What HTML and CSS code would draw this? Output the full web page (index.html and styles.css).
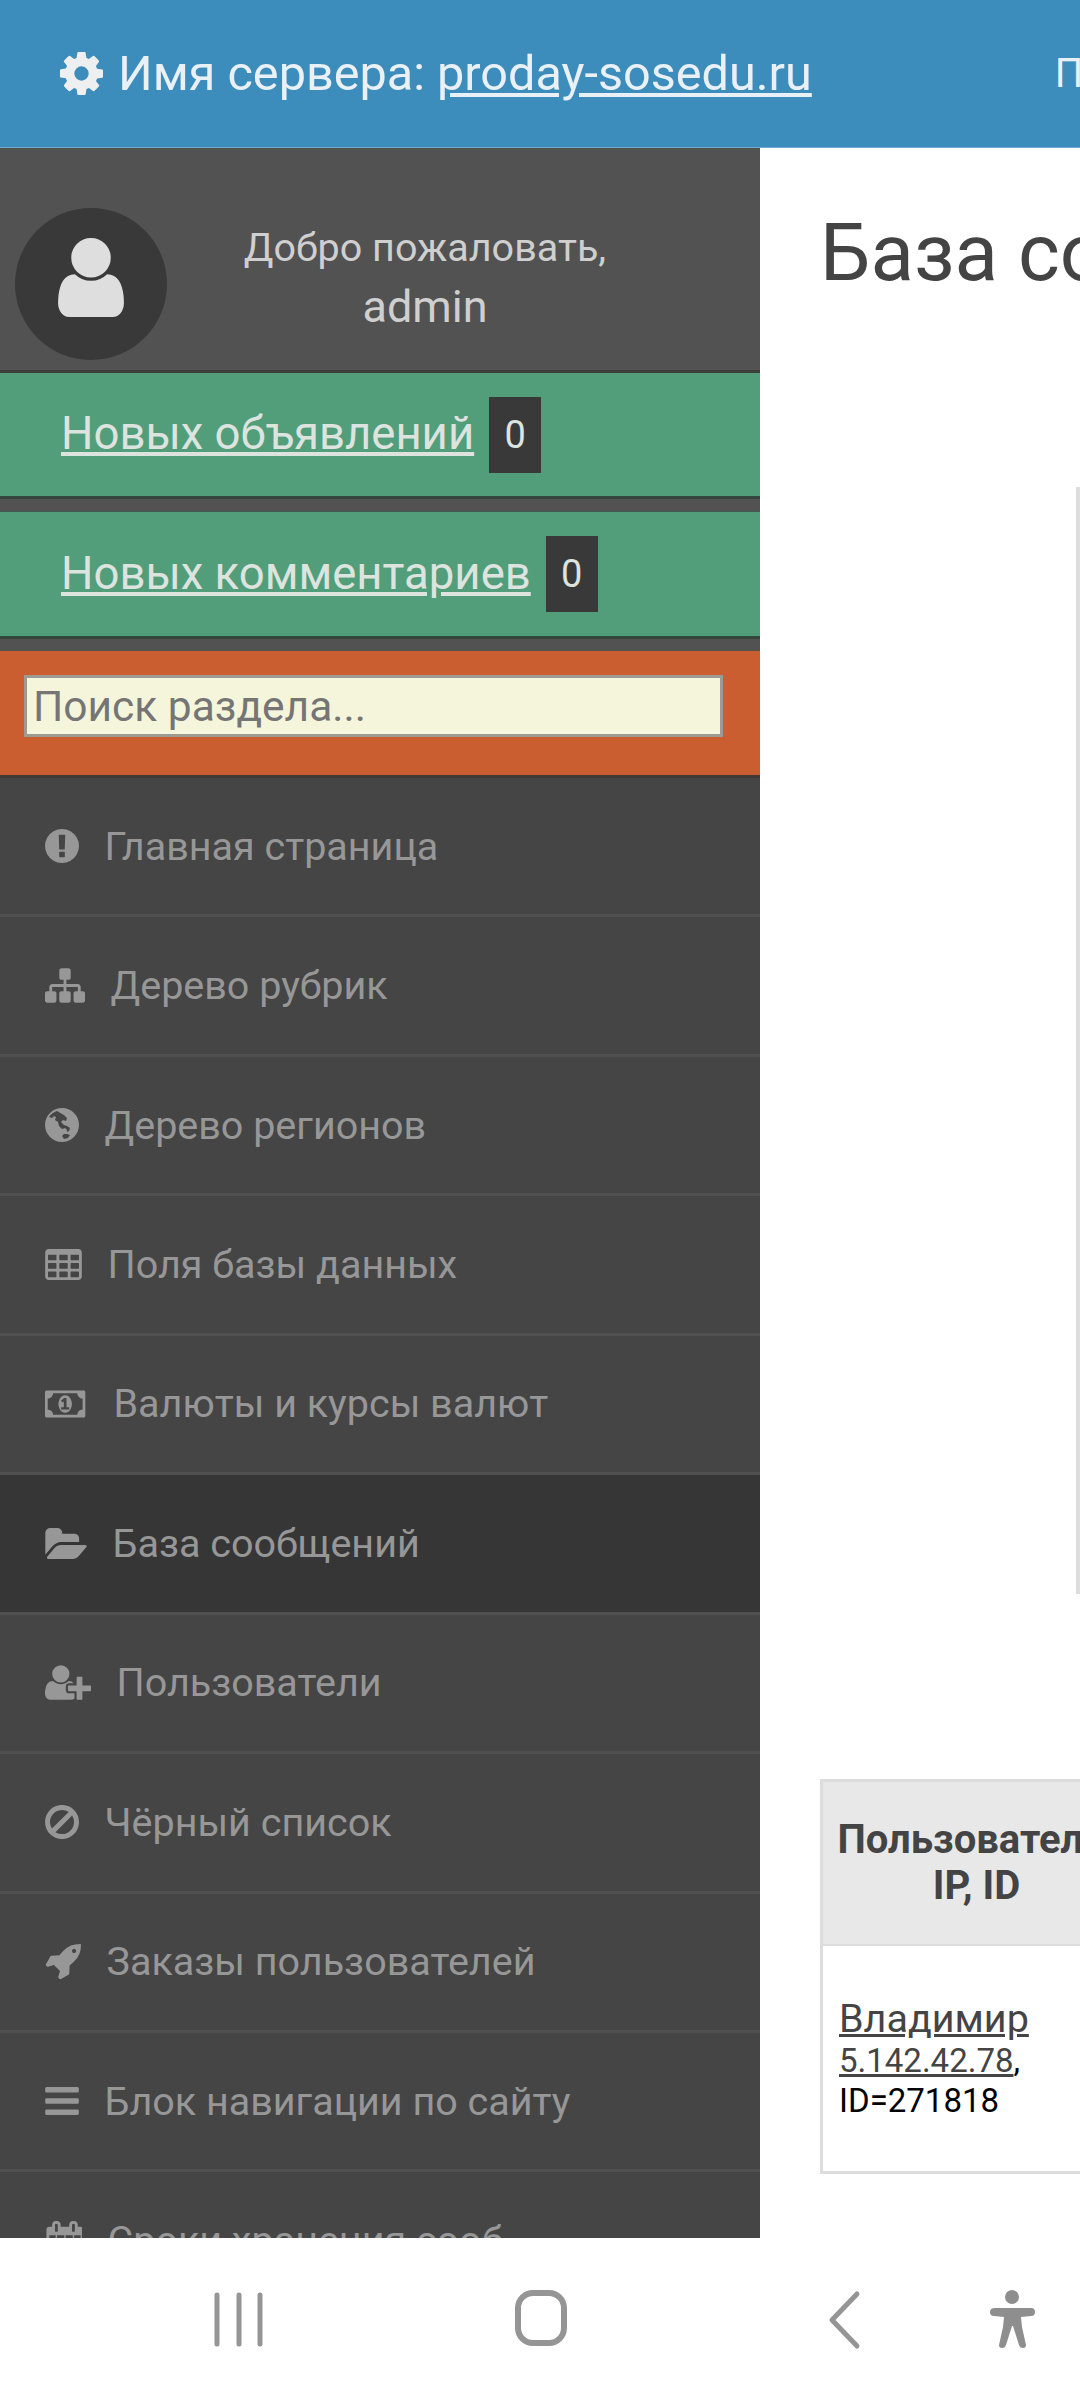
FILE: index.html
```html
<!DOCTYPE html>
<html lang="ru">
<head>
  <meta charset="UTF-8" />
  <meta name="viewport" content="width=device-width, initial-scale=1" />
  <title>База сообщений</title>
  <link rel="stylesheet" href="styles.css">
</head>
<body>
  <header class="topbar">
    <svg class="gear" viewBox="128 128 1536 1536" width="43" height="43"><path d="M1152 896q0-106-75-181t-181-75-181 75-75 181 75 181 181 75 181-75 75-181zm512-109v222q0 12-8 23t-20 13l-185 28q-19 54-39 91 35 50 107 138 10 12 10 25t-9 23q-27 37-99 108t-94 71q-12 0-26-9l-138-108q-44 23-91 38-16 136-29 186-7 28-36 28h-222q-14 0-24.5-8.5t-11.5-21.5l-28-184q-49-16-90-37l-141 107q-10 9-25 9-14 0-25-11-126-114-165-168-7-10-7-23 0-12 8-23 15-21 51-66.5t54-70.5q-27-50-41-99l-183-27q-13-2-21-12.5t-8-23.5v-222q0-12 8-23t19-13l186-28q14-46 39-92-40-57-107-138-10-12-10-24 0-10 9-23 26-36 98.5-107.5t94.5-71.5q13 0 26 10l138 107q44-23 91-38 16-136 29-186 7-28 36-28h222q14 0 24.5 8.5t11.5 21.5l28 184q49 16 90 37l142-107q9-9 24-9 13 0 25 10 129 119 165 170 7 8 7 22 0 12-8 23-15 21-51 66.5t-54 70.5q26 50 41 98l183 28q13 2 21 12.5t8 23.5z"/></svg>
    <span class="server">Имя сервера: <a href="#">proday-sosedu.ru</a></span>
    <span class="top-next">П</span>
  </header>

  <div class="layout">
    <aside class="sidebar">
      <div class="profile">
        <div class="avatar">
          <svg viewBox="256 128 1280 1536" width="66" height="79"><path d="M1536 1399q0 109-62.5 187t-150.5 78h-854q-88 0-150.5-78t-62.5-187q0-85 8.5-160.5t31.5-152 58.5-131 94-89 134.5-34.5q131 128 313 128t313-128q76 0 134.5 34.5t94 89 58.5 131 31.5 152 8.5 160.5zm-256-887q0 159-112.5 271.5t-271.5 112.5-271.5-112.5-112.5-271.5 112.5-271.5 271.5-112.5 271.5 112.5 112.5 271.5z"/></svg>
        </div>
        <div class="welcome">
          <p class="hello">Добро пожаловать,</p>
          <p class="name">admin</p>
        </div>
      </div>

      <div class="notice">
        <a href="#">Новых объявлений</a>
        <span class="badge">0</span>
      </div>
      <div class="notice">
        <a href="#">Новых комментариев</a>
        <span class="badge">0</span>
      </div>

      <div class="search">
        <input type="text" class="search-field" placeholder="Поиск раздела..." />
      </div>

      <ul class="menu">
        <li>
          <svg viewBox="128 128 1536 1536" width="34" height="34"><path d="M896 128q209 0 385.5 103t279.5 279.5 103 385.5-103 385.5-279.5 279.5-385.5 103-385.5-103-279.5-279.5-103-385.5 103-385.5 279.5-279.5 385.5-103zm128 1247v-190q0-14-9-23.5t-22-9.5h-192q-13 0-23 10t-10 23v190q0 13 10 23t23 10h192q13 0 22-9.5t9-23.5zm-2-344l18-621q0-12-10-18-10-8-24-8h-220q-14 0-24 8-10 6-10 18l17 621q0 10 10 17.5t24 7.5h185q14 0 23.5-7.5t10.5-17.5z"/></svg>
          Главная страница
        </li>
        <li>
          <svg viewBox="0 128 1792 1536" width="40" height="35"><path d="M1792 1248v320q0 40-28 68t-68 28h-320q-40 0-68-28t-28-68v-320q0-40 28-68t68-28h96v-192h-512v192h96q40 0 68 28t28 68v320q0 40-28 68t-68 28h-320q-40 0-68-28t-28-68v-320q0-40 28-68t68-28h96v-192h-512v192h96q40 0 68 28t28 68v320q0 40-28 68t-68 28h-320q-40 0-68-28t-28-68v-320q0-40 28-68t68-28h96v-192q0-52 38-90t90-38h512v-192h-96q-40 0-68-28t-28-68v-320q0-40 28-68t68-28h320q40 0 68 28t28 68v320q0 40-28 68t-68 28h-96v192h512q52 0 90 38t38 90v192h96q40 0 68 28t28 68z"/></svg>
          Дерево рубрик
        </li>
        <li>
          <svg viewBox="0 0 34 34" width="34" height="34"><circle cx="17" cy="17" r="17"/><path class="cut" d="M12 3c-3 1-6 3-8 6l3 1 2-2 2 1-1 3 3 2 1 4 3 3 3-1 2 2v2l2-1 1-3-3-2-3-1-3-3 2-2 3 1 1-3-3-3-2-1zM19 26l-2 2 2 3 4-1 2-3-3-1z"/></svg>
          Дерево регионов
        </li>
        <li>
          <svg viewBox="64 128 1664 1408" width="37" height="31"><path d="M576 1376v-192q0-14-9-23t-23-9h-320q-14 0-23 9t-9 23v192q0 14 9 23t23 9h320q14 0 23-9t9-23zm0-384v-192q0-14-9-23t-23-9h-320q-14 0-23 9t-9 23v192q0 14 9 23t23 9h320q14 0 23-9t9-23zm512 384v-192q0-14-9-23t-23-9h-320q-14 0-23 9t-9 23v192q0 14 9 23t23 9h320q14 0 23-9t9-23zm-512-768v-192q0-14-9-23t-23-9h-320q-14 0-23 9t-9 23v192q0 14 9 23t23 9h320q14 0 23-9t9-23zm512 384v-192q0-14-9-23t-23-9h-320q-14 0-23 9t-9 23v192q0 14 9 23t23 9h320q14 0 23-9t9-23zm512 384v-192q0-14-9-23t-23-9h-320q-14 0-23 9t-9 23v192q0 14 9 23t23 9h320q14 0 23-9t9-23zm-512-768v-192q0-14-9-23t-23-9h-320q-14 0-23 9t-9 23v192q0 14 9 23t23 9h320q14 0 23-9t9-23zm512 384v-192q0-14-9-23t-23-9h-320q-14 0-23 9t-9 23v192q0 14 9 23t23 9h320q14 0 23-9t9-23zm0-384v-192q0-14-9-23t-23-9h-320q-14 0-23 9t-9 23v192q0 14 9 23t23 9h320q14 0 23-9t9-23zm128-320v1088q0 66-47 113t-113 47h-1344q-66 0-113-47t-47-113v-1088q0-66 47-113t113-47h1344q66 0 113 47t47 113z"/></svg>
          Поля базы данных
        </li>
        <li>
          <svg viewBox="0 256 2048 1280" width="43" height="28"><path d="M768 1152h384v-96h-128v-448h-114l-148 137 77 80q42-37 55-57h2v288h-128v96zm512-256q0 70-21 142t-59.5 134-101.5 101-138 39-138-39-101.5-101-59.5-134-21-142 21-142 59.5-134 101.5-101 138-39 138 39 101.5 101 59.5 134 21 142zm512 256v-512q-106 0-181-75t-75-181h-1152q0 106-75 181t-181 75v512q106 0 181 75t75 181h1152q0-106 75-181t181-75zm128-832v1152q0 26-19 45t-45 19h-1792q-26 0-45-19t-19-45v-1152q0-26 19-45t45-19h1792q26 0 45 19t19 45z"/></svg>
          Валюты и курсы валют
        </li>
        <li class="active">
          <svg viewBox="-64 128 1879 1408" width="42" height="31"><path d="M1815 952q0 31-31 66l-336 396q-43 51-120.5 86.5t-143.5 35.5h-1088q-34 0-60.5-13t-26.5-43q0-31 31-66l336-396q43-51 120.5-86.5t143.5-35.5h1088q34 0 60.5 13t26.5 43zm-343-344v160h-832q-94 0-197 47.5t-164 119.5l-337 396-5 6q0-4-.5-12.5t-.5-12.5v-960q0-92 66-158t158-66h320q92 0 158 66t66 158v32h544q92 0 158 66t66 158z"/></svg>
          База сообщений
        </li>
        <li>
          <svg viewBox="0 128 2048 1536" width="46" height="35"><path d="M704 896q-159 0-271.5-112.5t-112.5-271.5 112.5-271.5 271.5-112.5 271.5 112.5 112.5 271.5-112.5 271.5-271.5 112.5zm960 128h352q13 0 22.5 9.5t9.5 22.5v192q0 13-9.5 22.5t-22.5 9.5h-352v352q0 13-9.5 22.5t-22.5 9.5h-192q-13 0-22.5-9.5t-9.5-22.5v-352h-352q-13 0-22.5-9.5t-9.5-22.5v-192q0-13 9.5-22.5t22.5-9.5h352v-352q0-13 9.5-22.5t22.5-9.5h192q13 0 22.5 9.5t9.5 22.5v352zm-736 224q0 52 38 90t90 38h256v238q-68 50-171 50h-874q-121 0-194-69t-73-190q0-53 3.5-103.5t14-109 26.5-108.5 43-97.5 62-81 85.5-53.5 111.5-20q19 0 39 17 79 61 154.5 91.5t164.5 30.5 164.5-30.5 154.5-91.5q20-17 39-17 132 0 217 96h-223q-52 0-90 38t-38 90v192z"/></svg>
          Пользователи
        </li>
        <li>
          <svg viewBox="128 125 1536 1536" width="34" height="34"><path d="M1440 893q0-161-87-295l-754 753q137 89 297 89 111 0 211.5-43.5t173.5-116.5 116-174.5 43-212.5zm-999 299l755-754q-135-91-300-91-148 0-273 73t-198 199-73 274q0 162 89 299zm1223-299q0 157-61 300t-163.5 246-245 164-298.5 61-298.5-61-245-164-163.5-246-61-300 61-299.5 163.5-245.5 245-164 298.5-61 298.5 61 245 164 163.5 245.5 61 299.5z"/></svg>
          Чёрный список
        </li>
        <li>
          <svg viewBox="64 128 1664 1664" width="36" height="36"><path d="M1504 448q0-40-28-68t-68-28-68 28-28 68 28 68 68 28 68-28 28-68zm224-288q0 249-75.5 430.5t-253.5 360.5q-81 80-195 176l-20 379q-2 16-16 26l-384 224q-7 4-16 4-12 0-23-9l-64-64q-13-14-8-32l85-276-281-281-276 85q-3 1-9 1-14 0-23-9l-64-64q-17-19-5-39l224-384q10-14 26-16l379-20q96-114 176-195 188-187 358-258t431-71q14 0 24 9.5t10 22.5z"/></svg>
          Заказы пользователей
        </li>
        <li>
          <svg viewBox="128 256 1536 1280" width="34" height="28"><path d="M1664 1344v128q0 26-19 45t-45 19h-1408q-26 0-45-19t-19-45v-128q0-26 19-45t45-19h1408q26 0 45 19t19 45zm0-512v128q0 26-19 45t-45 19h-1408q-26 0-45-19t-19-45v-128q0-26 19-45t45-19h1408q26 0 45 19t19 45zm0-512v128q0 26-19 45t-45 19h-1408q-26 0-45-19t-19-45v-128q0-26 19-45t45-19h1408q26 0 45 19t19 45z"/></svg>
          Блок навигации по сайту
        </li>
        <li>
          <svg viewBox="128 0 1664 1792" width="37" height="40"><path d="M320 1664h288v-288h-288v288zm352 0h320v-288h-320v288zm-352-352h288v-320h-288v320zm352 0h320v-320h-320v320zm-352-384h288v-288h-288v288zm736 736h320v-288h-320v288zm-384-736h320v-288h-320v288zm768 736h288v-288h-288v288zm-384-352h320v-320h-320v320zm-352-864v-288q0-13-9.5-22.5t-22.5-9.5h-64q-13 0-22.5 9.5t-9.5 22.5v288q0 13 9.5 22.5t22.5 9.5h64q13 0 22.5-9.5t9.5-22.5zm736 864h288v-320h-288v320zm-384-384h320v-288h-320v288zm384 0h288v-288h-288v288zm32-480v-288q0-13-9.5-22.5t-22.5-9.5h-64q-13 0-22.5 9.5t-9.5 22.5v288q0 13 9.5 22.5t22.5 9.5h64q13 0 22.5-9.5t9.5-22.5zm384-64v1280q0 52-38 90t-90 38h-1408q-52 0-90-38t-38-90v-1280q0-52 38-90t90-38h128v-96q0-66 47-113t113-47h64q66 0 113 47t47 113v96h384v-96q0-66 47-113t113-47h64q66 0 113 47t47 113v96h128q52 0 90 38t38 90z"/></svg>
          Сроки хранения сооб.
        </li>
      </ul>
    </aside>

    <main class="content">
      <h1>База сообщений</h1>
      <div class="filter-box"></div>
      <table class="messages">
        <thead>
          <tr><th>Пользователь,<br>IP, ID</th></tr>
        </thead>
        <tbody>
          <tr>
            <td>
              <a class="user" href="#">Владимир</a><br>
              <span class="meta"><a href="#">5.142.42.78</a>,<br>ID=271818</span>
            </td>
          </tr>
        </tbody>
      </table>
    </main>
  </div>

  <nav class="softkeys">
    <svg viewBox="0 0 1080 162" width="1080" height="162">
      <path class="key" d="M217 57v49M239 57v49M260 57v49"/>
      <rect class="key home" x="518" y="55" width="46" height="50" rx="15"/>
      <path class="key back" d="M857 56l-25 26 25 26"/>
      <ellipse class="key-fill" cx="1012" cy="59" rx="7" ry="7"/>
      <path class="key-fill" d="M993 70h38q4 0 4 4t-4 4l-10 1 1 10 4 18q0 3-3 3t-4-3l-6-19h-1l-6 19q-1 3-4 3t-3-3l4-18 1-10-10-1q-4 0-4-4t5-4z"/>
    </svg>
  </nav>
</body>
</html>
```

FILE: styles.css
```css
:root {
  --blue: #3d8dbc;
  --side-top: #525252;
  --side: #454545;
  --side-line: #505050;
  --side-active: #363636;
  --dark: #393939;
  --green: #529e7b;
  --orange: #cb5e30;
  --menu-text: #979797;
  --light: #dde3df;
}

* {
  box-sizing: border-box;
}

body {
  margin: 0;
  width: 1080px;
  height: 2400px;
  overflow: hidden;
  display: flex;
  flex-direction: column;
  background: #ffffff;
  font-family: Roboto, "Liberation Sans", sans-serif;
}

p,
h1,
ul {
  margin: 0;
  padding: 0;
}

.topbar {
  height: 148px;
  flex: none;
  display: flex;
  align-items: center;
  padding-left: 60px;
  background: var(--blue);
  border-bottom: 1px solid #6fa9cc;
  color: #e9f1f7;
  font-size: 48.6px;
  overflow: hidden;
}

.gear {
  fill: #eeeff0;
  margin-right: 15px;
  flex: none;
}

.server {
  white-space: nowrap;
}

.server a {
  color: inherit;
}

.top-next {
  margin-left: 243px;
  font-size: 40px;
}

.layout {
  height: 2090px;
  flex: none;
  display: flex;
  overflow: hidden;
}

.sidebar {
  width: 760px;
  flex: none;
  background: var(--side-top);
}

.profile {
  height: 225px;
  display: flex;
  align-items: flex-start;
  padding: 60px 0 0 15px;
  border-bottom: 3px solid #3a3f3c;
}

.avatar {
  width: 152px;
  height: 152px;
  flex: none;
  display: flex;
  align-items: center;
  justify-content: center;
  padding-bottom: 13px;
  border-radius: 50%;
  background: var(--dark);
  fill: #dedede;
}

.welcome {
  width: 516px;
  margin-top: 10px;
  text-align: center;
  color: #cfcfcf;
}

.hello {
  font-size: 39.5px;
  line-height: 60px;
}

.name {
  font-size: 45px;
  line-height: 58px;
}

.notice {
  height: 126px;
  display: flex;
  align-items: center;
  gap: 15px;
  padding-left: 61px;
  margin-bottom: 12px;
  background: var(--green);
  border-bottom: 3px solid #35463f;
  font-size: 45.5px;
}

.notice + .notice {
  height: 128px;
  border-top: 1px solid #3f5a4e;
}

.notice a {
  margin-bottom: 2px;
  color: var(--light);
}

.badge {
  width: 52px;
  height: 76px;
  display: flex;
  align-items: center;
  justify-content: center;
  background: var(--dark);
  color: var(--light);
  font-size: 38px;
}

.search {
  height: 127px;
  padding: 24px 0 0 24px;
  background: var(--orange);
  border-bottom: 3px solid #3f3a37;
}

.search-field {
  display: block;
  width: 699px;
  height: 62px;
  padding: 0 6px;
  background: #f5f5dc;
  border: 3px solid #9c9a92;
  font-family: inherit;
  font-size: 42.5px;
}

.search-field::placeholder {
  color: #757575;
  opacity: 1;
}

.menu {
  list-style: none;
  background: var(--side);
}

.menu li {
  height: 139.45px;
  display: flex;
  align-items: center;
  gap: 25.5px;
  padding-left: 45px;
  border-bottom: 3px solid var(--side-line);
  color: var(--menu-text);
  font-size: 39.5px;
  white-space: nowrap;
}

.menu li.active {
  background: var(--side-active);
}

.menu svg {
  fill: var(--menu-text);
  flex: none;
}

.menu .cut {
  fill: var(--side);
}

.content {
  flex: 1;
  min-width: 0;
  padding-left: 60px;
  overflow: hidden;
}

h1 {
  margin-top: 60px;
  color: #444444;
  font-size: 80px;
  font-weight: 400;
  line-height: 90px;
  white-space: nowrap;
}

.filter-box {
  width: 10px;
  height: 1107px;
  margin: 189px 0 0 256px;
  border-left: 4px solid #dddddd;
}

.messages {
  width: 310px;
  margin-top: 185px;
  border-collapse: collapse;
  border-left: 3px solid #dddddd;
  border-top: 3px solid #dddddd;
  border-bottom: 3px solid #dddddd;
}

.messages th {
  height: 164px;
  background: #e8e8e8;
  border-bottom: 2px solid #dddddd;
  color: #444444;
  font-size: 40px;
  line-height: 46px;
  white-space: nowrap;
}

.messages td {
  height: 228px;
  padding: 3px 0 0 16px;
  color: #000000;
  font-size: 33px;
  line-height: 40px;
}

.messages a {
  color: #444444;
}

.messages .user {
  font-size: 39.5px;
}

.softkeys {
  height: 162px;
  flex: none;
  background: #ffffff;
}

.key {
  fill: none;
  stroke: #959595;
  stroke-width: 5;
  stroke-linecap: round;
  stroke-linejoin: round;
}

.home {
  stroke-width: 6;
}

.key-fill {
  fill: #8e8e8e;
}
```
